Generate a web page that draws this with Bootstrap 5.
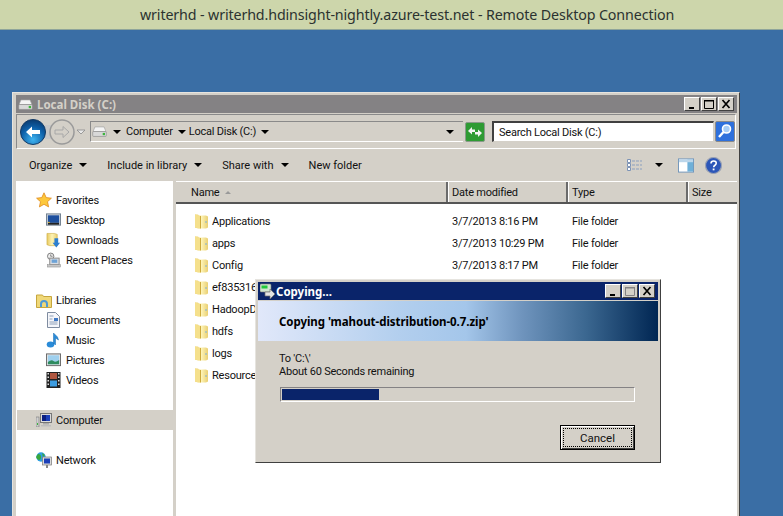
<!DOCTYPE html>
<html lang="en"><head><meta charset="utf-8"><title>Remote Desktop</title>
<link href="https://cdn.jsdelivr.net/npm/bootstrap@5.3.0/dist/css/bootstrap.min.css" rel="stylesheet">
<style>
html,body{height:100%;margin:0;overflow:hidden}
body{font-family:Roboto,"Liberation Sans",sans-serif;font-size:11px;letter-spacing:-.22px;line-height:13px;color:#111;background:#3a6ea5}
.rdp-bar{height:30px;background:#cdd6ab;border-bottom:1px solid #8fa59a;font-family:"Noto Sans",sans-serif;font-size:14.25px;color:#2b3230;padding-left:140px;line-height:29px;letter-spacing:-.12px}
.desk{position:relative;height:486px;overflow:hidden}
.win{position:absolute;background:#d4d0c8;border:1px solid #e6e4df;border-right-color:#404040;border-bottom-color:#404040;box-shadow:inset 2px 2px 0 #d4d0c8,inset -2px -2px 0 #d4d0c8}
.ex{left:12px;top:62px;width:728px;height:500px;padding:2px 2px 0 3px}
.ex-title{height:18px;background:#848284;color:#d4d0c8;font-family:"Noto Sans",sans-serif;font-weight:700;font-size:11.5px;letter-spacing:0;padding-left:2px}
.ctl{width:16px;height:14px;background:#d4d0c8;border:1px solid;border-color:#fff #404040 #404040 #fff;display:block}
.ctl svg{display:block}
.ctls{gap:1px;margin-right:3px}
.addr{height:35px;border:1px solid #8a8a8a;border-right-color:#fff;border-bottom-color:#fff;margin:1px 1px 0 0;padding:0 2px}
.back{width:68px;height:28px;flex:none}
.crumb{width:373px;height:21px;margin-left:3px;border:1px solid #8a8a8a;border-right:0;border-bottom-color:#fff;padding-left:1px;flex:none}
.crumb svg{flex:none}
.bc-a{margin:0 5px}
.bc-b{margin:0 5px 0 3px}
.tri{width:0;height:0;border-left:4px solid transparent;border-right:4px solid transparent;border-top:4px solid #000;display:inline-block;flex:none}
.sp0{margin-left:6px}
.sp3{margin-left:auto;margin-right:9px}
.refresh{margin-left:2px;flex:none}
.search{width:222px;height:21px;margin-left:7px;background:#fff;border:1px solid #d4d0c8;border-top:2px solid #404040;border-left:2px solid #404040;padding-left:5px;flex:none}
.sbtn{margin-left:1px;flex:none}
.tools{height:32px;padding-left:13px;padding-right:15px;letter-spacing:0}
.tool{margin-right:10px}
.tool .tri{margin-left:7px;margin-right:10px}
.tool-r{margin-left:auto}
.vt{margin-left:13px}.vp{margin-left:15px}.vh{margin-left:11px}
.main{height:400px}
.navp{width:157px;background:#fff;padding-top:9px;flex:none}
.nrow{height:20px;gap:4px}
.nrow svg{flex:none}
.nsub{padding-left:30px;gap:5px}
.ntop{padding-left:20px}
.ngap{margin-top:20px}
.nsel{background:#d4d0c8;margin-left:1px;padding-left:19px}
.split{width:3px;flex:none}
.listp{flex:1;background:#fff;min-width:0}
.lhead{height:23px;background:#d4d0c8;border-top:1px solid #fff;border-bottom:2px solid #555}
.lh{border-right:2px solid #6b6b6b;height:20px;padding-left:4px;box-shadow:1px 0 0 #fff}
.c1{width:272px;flex:none}.c2{width:120px;flex:none}.c3{width:120px;flex:none}.c4{flex:1}
.lh.c1{padding-left:15px}.lh.c4{border-right:0;box-shadow:none}
.sorttri{width:0;height:0;border-left:3px solid transparent;border-right:3px solid transparent;border-bottom:3px solid #999;margin-left:6px;display:inline-block}
.lbody{padding-top:6px}
.lrow{height:22px}
.lrow .c1{padding-left:19px;gap:4px;display:flex;align-items:center}
.lrow .c2,.lrow .c3{padding-left:4px}
.dlg{left:255px;top:249px;width:406px;height:184px;padding:2px;z-index:5}
.dlg-title{height:18px;background:#0a246a;color:#fff;font-family:"Noto Sans",sans-serif;font-weight:700;font-size:11.5px;letter-spacing:0;padding-left:2px}
.banner{height:40px;margin-top:1px;background:linear-gradient(90deg,#e1e8fa 0%,#b3cfee 35%,#a4c6ea 52%,#6f94bd 66%,#3b6790 82%,#002653 100%);font-family:"Noto Sans",sans-serif;font-weight:700;letter-spacing:-.05px;padding-left:21px;color:#000;font-size:11.5px}
.dlg-body{padding:11px 22px 0 21px}
.prog{height:15px;margin:9px 0 0 1px;width:355px;background:#d4d0c8;border:1px solid #fff;border-top-color:#848284;border-left-color:#848284;border-radius:0;padding:1px}
.prog .progress-bar{background:#0a246a;width:27.6%}
.cancel{width:75px;height:25px;background:#d4d0c8;border:1px solid #000;border-radius:0;padding:2px;color:#111;font-size:11.5px;line-height:14px;letter-spacing:0;box-shadow:inset 1px 1px 0 #fff,inset -1px -1px 0 #404040}
.cancel span{display:block;height:100%;border:1px dotted #000;padding-top:2px}
.cancel-row{margin-top:23px;width:355px;margin-left:1px}
</style></head><body>
<svg width="0" height="0" class="position-absolute">
<defs>
<linearGradient id="fg" x1="0" x2="1"><stop offset="0" stop-color="#e8c95f"/><stop offset=".5" stop-color="#fdf3b5"/><stop offset="1" stop-color="#e9cf72"/></linearGradient>
<radialGradient id="bk" cx=".5" cy=".8" r=".8"><stop offset="0" stop-color="#3fb4f0"/><stop offset=".6" stop-color="#0d5fa8"/><stop offset="1" stop-color="#0a3b70"/></radialGradient>
<symbol id="folder" viewBox="0 0 13 16"><path d="M0 1.500h3l1 1h7l2 1v11l-2 1H3l-3-1z" fill="url(#fg)"/><path d="M0 1.500l5 1.500v12.500l-5-1z" fill="#f5e08c"/><path d="M5.500 3v12.500" stroke="#cda93c"/><path d="M11 8v2" stroke="#7cb0d8"/></symbol>
<symbol id="drive" viewBox="0 0 16 12"><path d="M3 1h10l2 5H1z" fill="#f4f4f4" stroke="#a0a0a0" stroke-width=".7"/><rect x=".6" y="6" width="14.8" height="5.4" rx="1" fill="#d8d8d8" stroke="#8a8a8a" stroke-width=".7"/><rect x="11.5" y="7.5" width="2.5" height="2.5" fill="#3cb43c"/></symbol>
<symbol id="star" viewBox="0 0 16 16"><path d="M8 .8l2.2 4.8 5.2.6-3.9 3.5 1.1 5.2L8 12.3l-4.6 2.6 1.1-5.2L.6 6.2l5.2-.6z" fill="#fdc83c" stroke="#e08a1e" stroke-width=".8"/></symbol>
<symbol id="desktop" viewBox="0 0 16 14"><rect x=".5" y=".5" width="15" height="12" fill="#cfd6de" stroke="#6e7d8d"/><rect x="2" y="2" width="12" height="8" fill="#1d4f9e"/><rect x="2" y="10" width="12" height="2" fill="#222"/><rect x="2" y="9" width="2" height="1" fill="#f0c030"/></symbol>
<symbol id="down" viewBox="0 0 16 16"><path d="M1 1h8l3 1v12H4l-3-1z" fill="url(#fg)" stroke="#c9a93f" stroke-width=".6"/><path d="M9 6h4v5h2l-4 5-4-5h2z" fill="#2d7fd0"/></symbol>
<symbol id="recent" viewBox="0 0 16 16"><circle cx="5" cy="4" r="3.4" fill="#eee" stroke="#777"/><path d="M5 2v2h2" stroke="#555" fill="none" stroke-width=".7"/><rect x="4" y="6" width="10" height="7" fill="#d9dde3" stroke="#888"/><rect x="6" y="7.5" width="6" height="3.5" fill="#6da2d6"/><rect x="1.500" y="13" width="14" height="2.500" fill="#c6c6c6" stroke="#888" stroke-width=".5"/></symbol>
<symbol id="lib" viewBox="0 0 16 15"><path d="M.5 2h6l1 1.500h8v11H.5z" fill="#f0d878" stroke="#c6a63e"/><path d="M4 14v-3q0-4 4-4t4 4v3h-2v-3q0-2-2-2t-2 2v3z" fill="#4e9ad6"/></symbol>
<symbol id="doc" viewBox="0 0 14 16"><path d="M1 .5h8l4 4v11H1z" fill="#f5f6fa" stroke="#7f8ca0"/><rect x="7.500" y="6" width="4" height="3" fill="#3f78c4"/><path d="M3 4h4M3 7h3M3 10h8M3 12h8" stroke="#8fa0b8"/></symbol>
<symbol id="music" viewBox="0 0 14 16"><ellipse cx="4" cy="12.500" rx="3.800" ry="3" fill="#2a8bd8"/><path d="M7 12V1l4 4 1 3-3-2v7" fill="#2a8bd8" stroke="#1769ae" stroke-width=".5"/></symbol>
<symbol id="pics" viewBox="0 0 16 14"><rect x=".5" y=".5" width="15" height="12.500" fill="#e4e4e4" stroke="#666"/><rect x="2" y="2" width="12" height="9.500" fill="#9fd0ee"/><path d="M2 9q4-3 6-1t6-1v4.500H2z" fill="#2f8c5f"/></symbol>
<symbol id="video" viewBox="0 0 14 16"><rect width="14" height="16" fill="#222"/><path d="M1 1h1.500v1.500H1zM1 4.500h1.500V6H1zM1 8h1.500v1.500H1zM1 11.500h1.500V13H1zM11.500 1H13v1.500h-1.500zM11.500 4.500H13V6h-1.500zM11.500 8H13v1.500h-1.500zM11.500 11.500H13V13h-1.500z" fill="#ddd"/><rect x="3.500" y="1" width="7" height="6" fill="#b0563f"/><rect x="3.500" y="8.500" width="7" height="6" fill="#3c9ce0"/></symbol>
<symbol id="comp" viewBox="0 0 16 14"><rect x="0" y="4" width="3" height="10" fill="#cfcfcf" stroke="#777" stroke-width=".6"/><rect x="1" y="10" width="1" height="2" fill="#3cb43c"/><rect x="4.500" y=".5" width="11" height="9" fill="#d9d9d9" stroke="#777"/><rect x="6" y="2" width="8" height="6" fill="#1b3fb8"/><path d="M6 2h4v6H6z" fill="#0b1f80"/><rect x="7" y="10" width="6" height="1.500" fill="#aaa"/><rect x="5" y="12" width="10" height="1.500" fill="#bdbdbd"/></symbol>
<symbol id="net" viewBox="0 0 16 16"><circle cx="5" cy="5" r="4.700" fill="#2f9fe0"/><path d="M2 2q3 0 3 3t-2 3-3-3zM6 1l3 2-2 2z" fill="#39a83c"/><rect x="6.500" y="5" width="9" height="8" fill="#dcdcdc" stroke="#777" stroke-width=".7"/><rect x="8" y="6.500" width="6" height="5" fill="#1b3fb8"/><rect x="10" y="13" width="2" height="3" fill="#888"/></symbol>
<symbol id="copy" viewBox="0 0 16 16"><rect x="0" y="1" width="11" height="8" rx="1" fill="#cfe6cf" stroke="#777" stroke-width=".6"/><rect x="1.500" y="2.500" width="6" height="3" fill="#22c83c"/><path d="M5 9h5V6l5 5-5 5v-3H5z" fill="#e4e4e4" stroke="#6e6e6e" stroke-width=".7"/></symbol>
</defs></svg>

<div class="rdp-bar">writerhd - writerhd.hdinsight-nightly.azure-test.net - Remote Desktop Connection</div>
<div class="desk">

<section class="win ex">
 <div class="ex-title d-flex align-items-center gap-1">
  <svg width="15" height="11"><use href="#drive"/></svg><span>Local Disk (C:)</span>
  <div class="d-flex ctls ms-auto">
   <span class="ctl"><svg width="14" height="12"><path d="M4 9h5v2H4z" fill="#000"/></svg></span>
   <span class="ctl"><svg width="14" height="12"><path d="M2.500 2.500h9v8h-9z" fill="none" stroke="#000"/><path d="M2 2h10v1.500H2z"/></svg></span>
   <span class="ctl"><svg width="14" height="12"><path d="M3.500 2l7 8m0-8l-7 8" stroke="#000" stroke-width="1.700"/></svg></span>
  </div>
 </div>
 <div class="addr d-flex align-items-center">
  <svg class="back"><rect x="14" y="7" width="36" height="14" fill="#c8c8c8"/><circle cx="14" cy="14" r="12.500" fill="url(#bk)" stroke="#113a66"/><path d="M7 14l6-5.500V12h8v4h-8v3.500z" fill="#fff"/><circle cx="43" cy="14" r="12" fill="#d4d0c8" stroke="#9a9a9a" stroke-width="1.500"/><path d="M50 14l-6-5.500V12h-8v4h8v3.500z" fill="#d4d0c8" stroke="#a8a8a8"/><path d="M58 12h8l-4 4z" fill="#e8e8e8" stroke="#8a8a8a" stroke-width=".8"/></svg>
  <div class="crumb d-flex align-items-center">
   <svg width="15" height="11"><use href="#drive"/></svg>
   <span class="tri sp0"></span><span class="bc-a">Computer</span>
   <span class="tri"></span><span class="bc-b">Local Disk (C:)</span>
   <span class="tri"></span>
   <span class="tri sp3"></span>
  </div>
  <svg class="refresh" width="20" height="20" viewBox="0 0 20 20"><rect x=".5" y=".5" width="19" height="19" rx="1.500" fill="#2e9b33" stroke="#8a9a8a"/><path d="M3 9l4-4v2.500h3V10H7v2.500zM17 11l-4 4v-2.500h-3V10h3V7.500z" fill="#f4f4f4"/></svg>
  <div class="search d-flex align-items-center">Search Local Disk (C:)</div>
  <svg class="sbtn" width="20" height="21" viewBox="0 0 20 21"><rect x=".5" y=".5" width="19" height="20" rx="1.500" fill="#2e70dc" stroke="#8a8a8a"/><circle cx="11.500" cy="8" r="4" fill="#a8cdf6" stroke="#fff" stroke-width="1.600"/><path d="M8.500 11l-4.500 5" stroke="#fff" stroke-width="2.400"/></svg>
 </div>
 <div class="tools d-flex align-items-center">
  <span class="tool d-flex align-items-center">Organize<span class="tri"></span></span>
  <span class="tool d-flex align-items-center">Include in library<span class="tri"></span></span>
  <span class="tool d-flex align-items-center">Share with<span class="tri"></span></span>
  <span class="tool">New folder</span>
  <span class="tool-r d-flex align-items-center">
   <svg width="15" height="12" viewBox="0 0 15 12"><path d="M.500.500h3v3h-3zM.500 4.500h3v3h-3zM.500 8.500h3v3h-3z" fill="#fff" stroke="#7d93b5"/><path d="M5 2h10M5 6h10M5 10h10" stroke="#8a9fbf" stroke-dasharray="3 1"/></svg>
   <span class="tri vt"></span>
   <svg class="vp" width="16" height="15" viewBox="0 0 17 15"><rect x=".5" y=".5" width="16" height="14" fill="#fff" stroke="#6f93b8"/><rect x="10" y="1" width="6" height="13" fill="#6fb0d8"/><rect x="1" y="1" width="15" height="3" fill="#bcd6ea"/></svg>
   <svg class="vh" width="17" height="17" viewBox="0 0 17 17"><circle cx="8.500" cy="8.500" r="8" fill="#2c56b8" stroke="#9aa2b4" stroke-width="1.200"/><path d="M6 6.500q0-2.500 2.700-2.500t2.500 2.300q0 1.300-1.500 2.200-1 .6-1 1.800" fill="none" stroke="#fff" stroke-width="1.600"/><rect x="7.700" y="11.500" width="1.800" height="1.800" fill="#fff"/></svg>
  </span>
 </div>
 <div class="main d-flex">
  <nav class="navp">
   <div class="nrow ntop d-flex align-items-center"><svg width="16" height="16"><use href="#star"/></svg>Favorites</div>
   <div class="nrow nsub d-flex align-items-center"><svg width="15" height="14"><use href="#desktop"/></svg>Desktop</div>
   <div class="nrow nsub d-flex align-items-center"><svg width="15" height="16"><use href="#down"/></svg>Downloads</div>
   <div class="nrow nsub d-flex align-items-center"><svg width="15" height="16"><use href="#recent"/></svg>Recent Places</div>
   <div class="nrow ntop ngap d-flex align-items-center"><svg width="16" height="15"><use href="#lib"/></svg>Libraries</div>
   <div class="nrow nsub d-flex align-items-center"><svg width="15" height="16"><use href="#doc"/></svg>Documents</div>
   <div class="nrow nsub d-flex align-items-center"><svg width="15" height="16"><use href="#music"/></svg>Music</div>
   <div class="nrow nsub d-flex align-items-center"><svg width="15" height="14"><use href="#pics"/></svg>Pictures</div>
   <div class="nrow nsub d-flex align-items-center"><svg width="15" height="16"><use href="#video"/></svg>Videos</div>
   <div class="nrow nsel ngap d-flex align-items-center"><svg width="16" height="14"><use href="#comp"/></svg>Computer</div>
   <div class="nrow ntop ngap d-flex align-items-center"><svg width="16" height="16"><use href="#net"/></svg>Network</div>
  </nav>
  <div class="split"></div>
  <div class="listp">
   <div class="lhead d-flex">
    <div class="lh c1 d-flex align-items-center">Name<span class="sorttri"></span></div>
    <div class="lh c2 d-flex align-items-center">Date modified</div>
    <div class="lh c3 d-flex align-items-center">Type</div>
    <div class="lh c4 d-flex align-items-center">Size</div>
   </div>
   <div class="lbody">
    <div class="lrow d-flex align-items-center"><div class="c1"><svg width="13" height="16"><use href="#folder"/></svg>Applications</div><div class="c2">3/7/2013 8:16 PM</div><div class="c3">File folder</div></div>
    <div class="lrow d-flex align-items-center"><div class="c1"><svg width="13" height="16"><use href="#folder"/></svg>apps</div><div class="c2">3/7/2013 10:29 PM</div><div class="c3">File folder</div></div>
    <div class="lrow d-flex align-items-center"><div class="c1"><svg width="13" height="16"><use href="#folder"/></svg>Config</div><div class="c2">3/7/2013 8:17 PM</div><div class="c3">File folder</div></div>
    <div class="lrow d-flex align-items-center"><div class="c1"><svg width="13" height="16"><use href="#folder"/></svg>ef8353162a</div></div>
    <div class="lrow d-flex align-items-center"><div class="c1"><svg width="13" height="16"><use href="#folder"/></svg>HadoopData</div></div>
    <div class="lrow d-flex align-items-center"><div class="c1"><svg width="13" height="16"><use href="#folder"/></svg>hdfs</div></div>
    <div class="lrow d-flex align-items-center"><div class="c1"><svg width="13" height="16"><use href="#folder"/></svg>logs</div></div>
    <div class="lrow d-flex align-items-center"><div class="c1"><svg width="13" height="16"><use href="#folder"/></svg>Resources</div></div>
   </div>
  </div>
 </div>
</section>

<section class="win dlg">
 <div class="dlg-title d-flex align-items-center">
  <svg width="16" height="16"><use href="#copy"/></svg><span>Copying...</span>
  <div class="d-flex ctls ms-auto">
   <span class="ctl"><svg width="14" height="12"><path d="M4 9h5v2H4z" fill="#000"/></svg></span>
   <span class="ctl"><svg width="14" height="12"><path d="M2.500 2.500h9v8h-9z" fill="none" stroke="#848284"/><path d="M2 2h10v1.500H2z" fill="#848284"/></svg></span>
   <span class="ctl"><svg width="14" height="12"><path d="M3.500 2l7 8m0-8l-7 8" stroke="#000" stroke-width="1.700"/></svg></span>
  </div>
 </div>
 <div class="banner d-flex align-items-center">Copying 'mahout-distribution-0.7.zip'</div>
 <div class="dlg-body">
  <div>To 'C:\'</div>
  <div>About 60 Seconds remaining</div>
  <div class="progress prog"><div class="progress-bar"></div></div>
  <div class="cancel-row d-flex justify-content-end"><button class="btn cancel" type="button"><span>Cancel</span></button></div>
 </div>
</section>
</div>
<script src="https://cdn.jsdelivr.net/npm/bootstrap@5.3.0/dist/js/bootstrap.bundle.min.js"></script>
</body></html>
